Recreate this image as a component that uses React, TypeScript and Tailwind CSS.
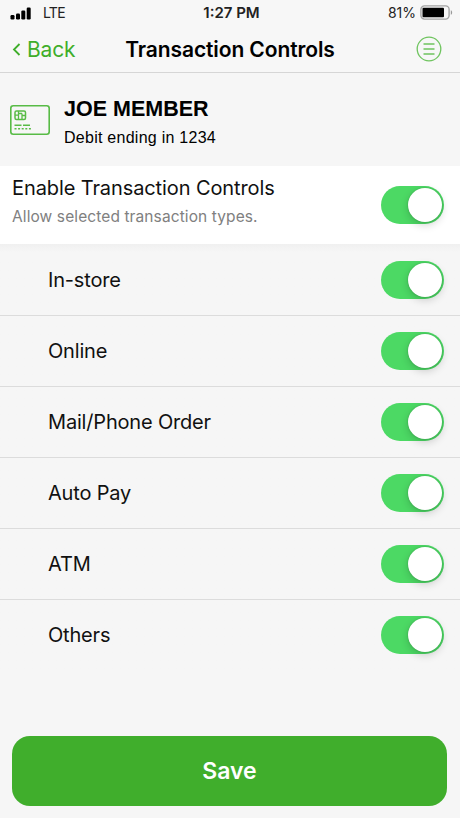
import { useState } from "react";

const CONTROLS = ["In-store", "Online", "Mail/Phone Order", "Auto Pay", "ATM", "Others"];

interface ToggleProps {
  label: string;
  checked: boolean;
  onChange: (checked: boolean) => void;
}

function Toggle({ label, checked, onChange }: ToggleProps) {
  return (
    <button
      type="button"
      role="switch"
      aria-label={label}
      aria-checked={checked}
      onClick={() => onChange(!checked)}
      className={`flex h-[38px] w-[63px] shrink-0 items-center rounded-full px-[2.5px] ${
        checked ? "justify-end bg-[#4cd964]" : "justify-start bg-[#d8d8d8]"
      }`}
    >
      <span className="size-[33.5px] rounded-full bg-white shadow-[0_3px_8px_rgba(0,0,0,0.18),0_0_2px_rgba(0,0,0,0.2)]" />
    </button>
  );
}

function StatusBar() {
  return (
    <div className="flex h-[26px] items-center justify-between pr-[7px] pl-[10px] text-[14px] text-[#222]">
      <div className="flex w-[100px] items-center gap-3">
        <svg width="21" height="13" viewBox="0 0 21 13" fill="#000">
          <rect x="0.5" y="8" width="4" height="4.5" rx="1.2" />
          <rect x="6" y="6.5" width="4" height="6" rx="1.2" />
          <rect x="11.3" y="3.5" width="4" height="9" rx="1.2" />
          <rect x="16.7" y="0.5" width="4" height="12" rx="1.2" />
        </svg>
        <span className="pb-[2px] tracking-[-0.7px]">LTE</span>
      </div>
      <span className="text-[15px] leading-5 font-semibold">1:27 PM</span>
      <div className="flex w-[100px] items-center justify-end gap-1">
        <span className="pb-[2px]">81%</span>
        <svg width="33" height="15" viewBox="0 0 33 15" fill="none" className="-mt-px">
          <rect x="0.9" y="0.9" width="28.2" height="13.2" rx="3.5" stroke="#a3a3a3" strokeWidth="1.4" />
          <rect x="2.5" y="2.7" width="21.5" height="9.6" rx="1" fill="#000" />
          <path d="M30.8 5.2 C32.6 5.8 32.6 9.2 30.8 9.8 Z" fill="#999" />
        </svg>
      </div>
    </div>
  );
}

function NavBar() {
  return (
    <div className="flex h-[46px] items-center justify-between pr-[18px] pl-3">
      <button
        type="button"
        className="flex w-[96px] items-center gap-[6px] pt-[2px] text-[21px] tracking-[-0.2px] text-[#3fae2a]"
      >
        <svg width="9" height="13" viewBox="0 0 9 13" fill="none" className="-mt-[2px]">
          <path d="M7.5 1 L2 6.5 L7.5 12" stroke="currentColor" strokeWidth="1.8" />
        </svg>
        Back
      </button>
      <h1 className="pt-px text-[21px] font-semibold tracking-[-0.1px] text-black">Transaction Controls</h1>
      <div className="flex w-[90px] justify-end">
        <svg width="26" height="26" viewBox="0 0 26 26" fill="none" stroke="#6fc45f" strokeWidth="1.3">
          <circle cx="13" cy="13" r="11.8" />
          <path d="M7.5 8 H18.5 M7.5 13 H18.5 M7.5 18 H18.5" />
        </svg>
      </div>
    </div>
  );
}

function CardIcon() {
  return (
    <svg width="40" height="30" viewBox="0 0 40 30" fill="none" stroke="#58bb46">
      <rect x="0.8" y="0.8" width="38.4" height="28.4" rx="2.5" strokeWidth="1.6" />
      <rect x="5" y="6" width="10.5" height="8.5" rx="1.5" strokeWidth="1.5" />
      <path d="M5 10.2 H8.5 M8.5 6 V14.5 M12 8.5 V14.5 M12 10.5 H15.5 M8.5 8.5 H12" strokeWidth="1.3" />
      <path d="M4.5 20.3 H11.5 M13 20.3 H20" strokeWidth="1.5" />
      <path d="M4.5 23.8 H21" strokeWidth="1.5" strokeDasharray="2 1.6" />
    </svg>
  );
}

export default function App() {
  const [enabled, setEnabled] = useState(true);
  const [active, setActive] = useState<string[]>(CONTROLS);

  const setControl = (name: string, on: boolean) =>
    setActive((prev) => (on ? [...prev, name] : prev.filter((item) => item !== name)));

  return (
    <div className="flex h-[818px] w-[460px] flex-col overflow-hidden bg-[#f6f6f6] font-['Inter',sans-serif] text-[#111]">
      <header className="h-[73px] shrink-0 border-b border-[#d6d6d6] bg-[#f7f7f7]">
        <StatusBar />
        <NavBar />
      </header>

      <section className="flex h-[93px] shrink-0 items-center gap-[14px] pl-[10px] font-['Liberation_Sans',sans-serif] text-black">
        <CardIcon />
        <div className="pt-2">
          <h2 className="text-[21.5px] leading-[28px] font-bold">JOE MEMBER</h2>
          <p className="text-[16px] leading-[30px] tracking-[0.26px]">Debit ending in 1234</p>
        </div>
      </section>

      <section className="flex h-[78px] shrink-0 items-center justify-between bg-white pr-4 pl-3">
        <div className="pb-[6px]">
          <h2 className="text-[20px] leading-[30px] tracking-[-0.1px]">Enable Transaction Controls</h2>
          <p className="text-[15.5px] leading-[28px] tracking-[0.1px] text-[#808080]">
            Allow selected transaction types.
          </p>
        </div>
        <Toggle label="Enable Transaction Controls" checked={enabled} onChange={setEnabled} />
      </section>

      <ul className="bg-linear-to-b from-[#f0f0f0] to-[#f6f6f6] to-[8px] pt-px">
        {CONTROLS.map((name) => (
          <li
            key={name}
            className="flex h-[71px] items-center justify-between border-b border-[#dcdcdc] pr-4 pl-12 text-[20px] tracking-[-0.18px] last:border-transparent"
          >
            {name}
            <Toggle label={name} checked={active.includes(name)} onChange={(on) => setControl(name, on)} />
          </li>
        ))}
      </ul>

      <footer className="mt-auto pr-[13px] pb-[12px] pl-3">
        <button
          type="button"
          className="h-[70px] w-full rounded-[18px] bg-[#40ae2c] text-[23px] font-semibold text-white"
        >
          Save
        </button>
      </footer>
    </div>
  );
}
